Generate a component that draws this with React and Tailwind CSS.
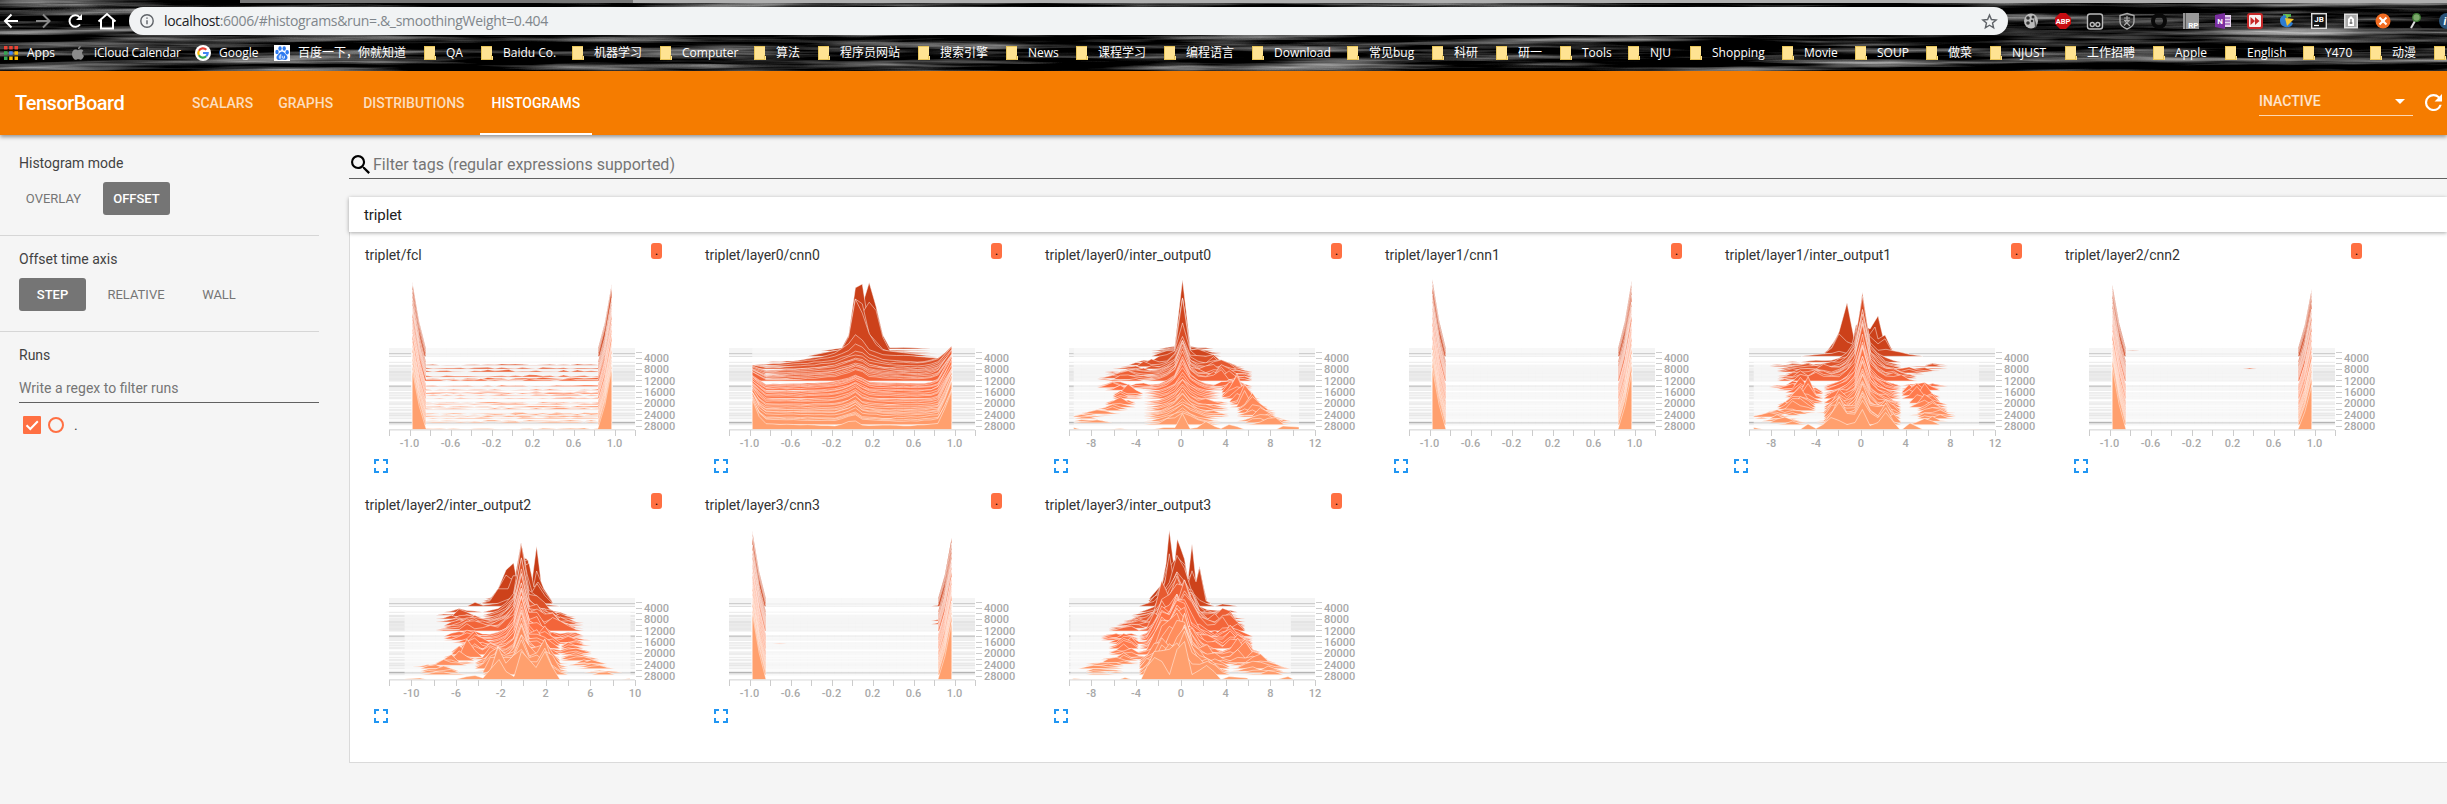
import React from "react";

const BASELINES = [
  79, 81, 83, 83.8, 86.3, 92.3, 95.3, 96.7, 99, 101, 102, 103, 104.3, 105.7, 107, 108.3, 109.7, 111,
  115.7, 116.4, 117.7, 119, 120.3, 122.7, 124, 125.7, 127.3, 128.7, 132, 133.3, 134.7, 137.3, 139.3,
  140.7, 143, 144, 145.3, 147, 148.7, 151.3, 152.8, 154.7, 159.5,
];
const STRONG = { 83.8: 0.22, 86.3: 0.16, 116.4: 0.2, 115.7: 0.14, 152.8: 0.42, 145.3: 0.12 };

const mix = (a, b, t) => a.map((v, i) => Math.round(v + (b[i] - v) * t));
function ridgeColor(y) {
  const t = (y - 79) / 80.5;
  const stops = [[198, 60, 22], [255, 112, 67], [255, 160, 110]];
  const c = t < 0.5 ? mix(stops[0], stops[1], t * 2) : mix(stops[1], stops[2], t * 2 - 1);
  return `rgb(${c.join(",")})`;
}
function noise(a, b, s) {
  const v = Math.sin(a * 127.1 + b * 311.7 + s * 74.7) * 43758.5453;
  return v - Math.floor(v);
}
function lerpKeys(keys, y) {
  if (y < keys[0][0] || y > keys[keys.length - 1][0]) return null;
  for (let i = 0; i < keys.length - 1; i++) {
    const a = keys[i];
    const b = keys[i + 1];
    if (y <= b[0]) {
      const t = (y - a[0]) / (b[0] - a[0] || 1);
      return a.map((v, j) => v + (b[j] - v) * t);
    }
  }
  return keys[0];
}
function at(pts, x) {
  if (x < pts[0][0] || x > pts[pts.length - 1][0]) return 0;
  for (let i = 0; i < pts.length - 1; i++) {
    const [x0, h0] = pts[i];
    const [x1, h1] = pts[i + 1];
    if (x <= x1) return h0 + ((h1 - h0) * (x - x0)) / (x1 - x0 || 1);
  }
  return 0;
}

const SPREAD = { range: [-9.5, 12], start: 4.7, step: 7.77 };

// A component is a list of [baseline, centre, half width, height] keys.
function spreadRidge(cfg, y, row) {
  const fixed = cfg.profiles && cfg.profiles[y];
  if (fixed) return fixed;
  const pts = [];
  for (let i = 0; i < 30; i++) {
    const x = cfg.start + i * cfg.step;
    let h = 0;
    cfg.lobes.forEach((keys, k) => {
      const c = lerpKeys(keys, y);
      if (!c) return;
      const d = Math.abs(x - c[1]) / (c[2] * (k < 2 && y > 113 ? 0.88 : 1));
      if (d < 1) h = Math.max(h, c[3] * (1 - d) * (0.12 + 1.25 * noise(i, row, k + cfg.seed)));
    });
    const s = lerpKeys(cfg.spike, y);
    if (s) {
      const n = Math.abs(Math.round((x - s[1]) / cfg.step));
      const fall = [1, s[2], s[2] * 0.5, s[2] * 0.22, s[2] * 0.1];
      if (n < 5) h = Math.max(h, s[3] * fall[n] * (0.82 + 0.3 * noise(i, row, 9 + cfg.seed)));
    }
    pts.push([x, h < 0.7 ? 0 : h]);
  }
  return pts;
}

function edgeRidge(cfg, y, row) {
  const pts = [];
  const t = (y - 79) / 80.5;
  const l = cfg.left[0] + (cfg.left[1] - cfg.left[0]) * t - 5 * noise(row, 1, cfg.seed);
  const r = cfg.right[0] + (cfg.right[1] - cfg.right[0]) * t - 5 * noise(row, 2, cfg.seed);
  for (let i = 0; i < 30; i++) {
    let h = 0;
    if (i === 0) h = l;
    else if (i === 1) h = l * 0.4;
    else if (i === 28) h = r * 0.4;
    else if (i === 29) h = r;
    else if (cfg.floor && i > 1 && i < 28) {
      const band = y > 97 && y < 112 ? 2.4 : 1.5;
      const mid = i > 9 ? 1 : 0.7;
      h = y > 90 && noise(row, 3, 2) > 0.25 ? noise(i, row, 5) * band * mid : 0;
    }
    pts.push([23.3 + i * 6.875, h]);
  }
  if (cfg.specks) cfg.specks.forEach(([b, i, h]) => b === y && (pts[i][1] = h));
  return pts;
}

const z = (list) => list.map(([x, h]) => [(x - 27) / 3, h]);
const BOWL = [
  [79, z([[97, 0], [405, 0], [427, 44], [447, 67], [467, 44], [490, 12], [510, 1], [560, 1.6], [630, 0], [695, 0]])],
  [81, z([[97, 0], [300, 0], [365, 3], [385, 14], [405, 63], [427, 67], [447, 22], [467, 8], [510, 1], [650, 0], [695, 0]])],
  [83, z([[97, 0], [300, 0], [365, 3], [385, 12], [405, 54], [427, 40], [447, 51], [467, 44], [490, 14], [510, 2], [640, 0], [695, 0]])],
  [83.8, z([[97, 0], [290, 0], [365, 4], [385, 13], [405, 55], [427, 50], [447, 20], [490, 4], [510, 2], [650, 0], [695, 0]])],
  [86.3, z([[97, 0], [260, 0], [365, 7], [385, 18], [405, 58], [427, 43], [447, 23], [467, 12], [490, 6], [640, 0], [695, 0]])],
  [92.3, z([[97, 0], [140, 0], [240, 2], [340, 8], [385, 18], [405, 28], [427, 22], [447, 13], [480, 8], [600, 6], [660, 4], [695, 12]])],
  [95.3, z([[97, 0], [250, 4], [340, 8], [385, 14], [405, 21], [427, 18], [450, 10], [500, 5], [600, 3], [650, 6], [695, 17]])],
  [99, z([[97, 4], [137, 1], [250, 3], [340, 6], [385, 11], [405, 13], [427, 12], [450, 7], [500, 4], [600, 3], [650, 6], [695, 21]])],
  [111, z([[97, 9], [137, 1], [250, 2], [340, 4], [385, 8], [405, 11], [427, 9], [450, 4], [500, 3], [600, 2], [650, 4], [695, 27]])],
  [128.7, z([[97, 15], [137, 3], [250, 2.5], [340, 4], [385, 8], [405, 12], [427, 7], [450, 4], [500, 3], [600, 3], [650, 4], [695, 33]])],
  [147, z([[97, 23], [117, 10], [137, 5], [350, 4], [385, 8], [405, 12], [427, 6], [500, 3], [600, 4], [655, 6], [675, 20], [695, 36]])],
  [159.5, z([[97, 27], [117, 12], [137, 5], [350, 3.5], [385, 7], [405, 8], [427, 4], [500, 3.6], [600, 4], [655, 6], [675, 20], [695, 36]])],
];
function bowlRidge(cfg, y, row) {
  let a = BOWL[0];
  let b = BOWL[0];
  for (let i = 0; i < BOWL.length; i++) {
    if (BOWL[i][0] <= y) a = BOWL[i];
    if (BOWL[i][0] >= y) {
      b = BOWL[i];
      break;
    }
  }
  const t = b[0] === a[0] ? 0 : (y - a[0]) / (b[0] - a[0]);
  const pts = [];
  for (let i = 0; i < 30; i++) {
    const x = 23.34 + i * 6.873;
    const h = at(a[1], x) * (1 - t) + at(b[1], x) * t;
    const n = h > 0 && y > 86.3 ? (noise(i, row, 4) - 0.5) * 0.8 : 0;
    pts.push([x, Math.max(0, h * (y > 93 ? 0.88 + 0.24 * noise(row, 8, i > 20 ? 2 : 1) : 1) + n)]);
  }
  return pts;
}

const CNN_TICKS = ["-1.0", "-0.6", "-0.2", "0.2", "0.6", "1.0"];
const cnnAxis = { n: 12, labels: CNN_TICKS, first: 1 };
const eightAxis = { n: 11, labels: ["-8", "-4", "0", "4", "8", "12"], first: 1 };
const tenAxis = { n: 11, labels: ["-10", "-6", "-2", "2", "6", "10"], first: 1 };

const CHARTS = [
  { tag: "triplet/fcl", axis: cnnAxis, make: edgeRidge, left: [70, 62], right: [69, 61], floor: true, seed: 1 },
  { tag: "triplet/layer0/cnn0", axis: cnnAxis, make: bowlRidge, seed: 2 },
  {
    tag: "triplet/layer0/inter_output0", axis: eightAxis, make: spreadRidge, ...SPREAD, seed: 3,
    spike: [[79, 113.4, 0.04, 72], [86.3, 113.4, 0.1, 60], [92.3, 113.4, 0.3, 36], [99, 113.4, 0.35, 30], [111, 113.4, 0.35, 30], [120, 113.4, 0.45, 24], [128, 113.4, 0.5, 18], [141, 113.4, 0.5, 19], [147, 113.4, 0.6, 15], [154.7, 113.4, 0.7, 12]],
    lobes: [
      [[79, 128, 17, 2.5], [83, 130, 20, 3], [92.3, 125, 32, 13], [97, 145, 26, 9], [105, 151, 34, 11], [111, 154, 30, 9], [118, 164, 19, 9], [125, 168, 16, 17], [135, 176, 15, 19], [142, 186, 19, 11], [149, 193, 27, 6], [154.7, 199, 27, 8]],
      [[83, 104, 20, 4], [92.3, 96, 30, 8], [99, 74, 30, 4], [108, 58, 30, 5], [111, 54, 28, 4], [117, 43, 17, 5], [124, 59, 13, 10], [136, 51, 16, 6], [143, 34, 24, 4], [147, 18, 22, 3], [153, 24, 20, 4]],
      [[97, 118, 38, 8], [111, 118, 34, 7], [116, 113, 27, 7], [154.7, 113, 32, 9]],
      [[115, 72, 14, 4], [120, 74, 12, 3]],
      [[133, 135, 24, 5], [148, 140, 22, 3]],
    ],
    profiles: { 159.5: [[4.7, 2], [12, 0], [40, 0], [51, 1], [60, 0], [83, 0], [95, 2], [106, 2], [113.4, 16], [121, 1], [128, 2], [137, 8], [146, 3], [152, 1], [160, 5], [168, 3], [176, 0], [207, 0], [214, 3.5], [230, 2.5]] },
  },
  { tag: "triplet/layer1/cnn1", axis: cnnAxis, make: edgeRidge, left: [71, 66], right: [70, 61], seed: 4 },
  {
    tag: "triplet/layer1/inter_output1", axis: eightAxis, make: spreadRidge, ...SPREAD, seed: 5,
    spike: [[86.3, 113.4, 0.3, 64], [100, 113.4, 0.35, 58], [111, 113.4, 0.4, 50], [125, 113.4, 0.4, 42], [140, 113.4, 0.4, 36], [150, 113.4, 0.45, 27], [154.7, 113.4, 0.5, 24]],
    lobes: [
      [[92.3, 62, 26, 2], [96, 48, 28, 4], [103, 68, 36, 8], [111, 62, 34, 9], [117, 44, 24, 5], [124, 59, 18, 16], [134, 52, 20, 15], [143, 42, 24, 9], [147, 22, 24, 4], [153, 36, 28, 5], [154.7, 40, 26, 5]],
      [[86.3, 95, 48, 6], [100, 113, 44, 11], [128, 113, 44, 13], [154.7, 113, 46, 16]],
      [[95, 180, 20, 3], [99, 182, 24, 2], [105, 140, 26, 8], [112, 150, 22, 6], [116, 178, 22, 4], [122, 168, 16, 13], [133, 176, 16, 14], [143, 184, 16, 8], [149, 186, 22, 5], [154.7, 178, 16, 6]],
      [[128, 90, 13, 10], [141, 90, 16, 13], [154.7, 90, 16, 22]],
      [[128, 136, 13, 8], [141, 136, 16, 11], [154.7, 136, 16, 18]],
    ],
    profiles: {
      79: [[80, 0], [90, 6], [98, 46], [105, 4], [114, 6], [121, 14], [129, 33], [135, 5], [144, 0]],
      81: [[78, 0], [84, 8], [90, 18], [98, 30], [104, 12], [107, 26], [113, 27], [121, 22], [129, 35], [134, 14], [144, 0]],
      83: [[75, 0], [83, 6], [90, 21], [98, 50], [106, 10], [108, 28], [113, 29], [118, 15], [126, 26], [129, 14], [136, 18], [144, 1], [152, 0]],
      83.8: [[75, 0], [83, 6], [90, 20], [98, 12], [103, 10], [108, 28], [113, 40], [118, 20], [129, 10], [136, 15], [144, 1], [160, 0]],
      86.3: [[52, 0], [70, 2], [83, 3], [90, 5], [98, 3], [106, 9], [113.4, 64], [121, 14], [129, 6], [137, 7], [152, 4], [160, 2], [174, 0]],
      159.5: [[4.7, 2], [15, 0], [51, 0], [59, 5.5], [67, 1], [74, 5], [82, 12], [90, 9], [98, 5], [106, 7], [113.4, 20], [121, 4], [129, 7], [136.6, 17], [145, 7], [151, 0], [153, 0], [161, 6.5], [174, 0], [210, 0], [230, 0.5]],
    },
  },
  { tag: "triplet/layer2/cnn2", axis: cnnAxis, make: edgeRidge, left: [65, 66], right: [63, 49], seed: 6, specks: [[81, 3, 0.6], [99, 20, 1]] },
  {
    tag: "triplet/layer2/inter_output2", axis: tenAxis, make: spreadRidge, ...SPREAD, start: 15.6, step: 7.79, seed: 7,
    spike: [[86.3, 132.4, 0.3, 63], [100, 132.4, 0.4, 50], [111, 132.4, 0.4, 46], [125, 132.4, 0.4, 42], [140, 132.4, 0.4, 38], [150, 132.4, 0.45, 34], [154.7, 132.4, 0.5, 28]],
    lobes: [
      [[92.3, 72, 20, 3], [95, 66, 18, 6], [103, 82, 30, 7], [111, 84, 36, 9], [118, 76, 26, 6], [125, 85, 15, 16], [137, 77, 18, 16], [143, 66, 19, 9], [148, 46, 26, 4], [154.7, 56, 24, 6]],
      [[92.3, 134, 30, 14], [111, 134, 38, 16], [128, 134, 30, 16], [154.7, 134, 46, 20]],
      [[95, 160, 20, 8], [103, 163, 26, 10], [111, 163, 28, 12], [117, 176, 22, 4], [127, 185, 13, 7], [137, 184, 20, 6], [148, 206, 20, 3], [154.7, 218, 18, 3]],
      [[92.3, 148, 14, 24], [110, 150, 18, 18], [132, 152, 18, 16], [154.7, 156, 18, 27]],
      [[130, 104, 20, 7], [154.7, 110, 20, 22]],
    ],
    profiles: {
      79: [[96, 0], [109, 3], [117, 16], [124, 34], [128, 8], [132, 42], [138, 40], [143, 18], [147.6, 53], [153, 10], [160, 0]],
      81: [[94, 0], [101, 2], [109, 12], [117, 31], [124.6, 38], [128, 20], [133, 40], [139, 41], [144, 12], [147.6, 30], [155, 12], [163, 0]],
      83: [[92, 0], [101, 3], [109, 14], [117, 28], [122, 24], [126, 26], [132, 60], [137, 38], [140, 40], [145, 16], [149, 21], [155, 12], [164, 0]],
      83.8: [[92, 0], [101, 3], [109, 15], [119, 15], [124, 28], [128, 28], [132, 61], [138, 30], [143, 12], [148, 20], [156, 8], [164, 0]],
      86.3: [[78, 0], [86, 4], [94, 1], [109, 3], [124, 9], [132.4, 62], [140, 16], [148, 10], [156, 2], [171, 0]],
      159.5: [[15.6, 0.6], [31, 1.5], [38, 0], [66, 0], [78, 3], [86, 4], [94, 1.5], [102, 11], [110, 20], [117, 8], [125, 3], [132.4, 28], [140, 20], [147, 12], [156, 28], [163, 13], [171, 0], [232, 0], [241, 1]],
    },
  },
  { tag: "triplet/layer3/cnn3", axis: cnnAxis, make: edgeRidge, left: [72, 68], right: [64, 60], seed: 8, specks: [[86.3, 27, 1], [101, 27, 1.6], [104.3, 27, 1.6], [124, 4, 0.5]] },
  {
    tag: "triplet/layer3/inter_output3", axis: eightAxis, make: spreadRidge, ...SPREAD, start: 1.5, step: 7.6, seed: 9,
    spike: [[86.3, 108.3, 0.6, 42], [100, 111, 0.6, 42], [111, 113, 0.6, 44], [125, 108.3, 0.6, 36], [140, 113, 0.5, 45], [150, 115, 0.5, 44], [154.7, 110, 0.6, 38]],
    lobes: [
      [[86.3, 74, 16, 2], [97, 84, 20, 5], [105, 76, 26, 6], [111, 64, 30, 4], [117, 48, 24, 3], [124, 59, 15, 10], [132, 56, 16, 9], [139, 58, 24, 6], [147, 33, 30, 4], [154.7, 32, 24, 3]],
      [[86.3, 108, 28, 38], [100, 110, 30, 36], [128, 110, 32, 38], [154.7, 108, 42, 32]],
      [[86.3, 152, 12, 5], [97, 152, 18, 6], [106, 154, 20, 18], [116, 160, 22, 9], [126, 167, 15, 16], [138, 173, 19, 17], [148, 190, 28, 8], [154.7, 194, 26, 4]],
      [[97, 135, 30, 7], [111, 138, 32, 9], [117, 132, 24, 10], [154.7, 138, 24, 14]],
      [[100, 95, 16, 38], [125, 95, 17, 30], [154.7, 90, 20, 24]],
    ],
    profiles: {
      79: [[80, 0], [93, 15], [97, 35], [100.3, 69], [104, 40], [108, 20], [116, 6], [119, 20], [123, 55], [127, 18], [130.5, 32], [137, 0]],
      81: [[79, 0], [87, 6], [94, 20], [100.3, 42], [104, 25], [108.3, 62], [112, 52], [115.5, 42], [119, 22], [123, 28], [127, 18], [130.5, 32], [138, 0]],
      83.8: [[79, 0], [86, 8], [92, 10], [96, 22], [100.3, 50], [104, 28], [108.3, 40], [116, 33], [119, 20], [123, 33], [127, 22], [130.5, 36], [137, 3], [142, 0]],
      83: [[79, 0], [87, 8], [94, 16], [100.3, 36], [108.3, 46], [116, 38], [119, 18], [123, 30], [127, 18], [130.5, 37], [137, 2], [142, 0]],
      159.5: [[1.5, 0], [5, 1], [15, 0.2], [50, 0], [56, 2], [63, 0], [72, 0], [78, 13], [85.5, 22], [93, 18], [100.5, 5], [108, 30], [115.5, 38], [123, 5], [130, 9], [137.5, 14], [145, 8], [152, 0], [160, 3], [178, 1.5], [180, 0], [208, 0], [219, 3], [225, 0]],
    },
  },
];

const Y_LABELS = [4000, 8000, 12000, 16000, 20000, 24000, 28000];

function RidgeChart({ chart }) {
  const W = 246;
  const step = W / chart.axis.n;
  return (
    <svg className="block h-[184px] w-[340px]" viewBox="-24 0 340 184">
      {BASELINES.map((y) => (
        <rect key={y} x="0" y={y - 0.5} width={W} height="1" fill="#000" fillOpacity={STRONG[y] || 0.09} />
      ))}
      <rect x="0" y="95" width={W} height="16" fill="#000" fillOpacity="0.02" />
      {BASELINES.map((y, row) => {
        const pts = chart.make(chart, y, row);
        const line = pts.map(([x, h]) => `L${x.toFixed(1)} ${(y - h).toFixed(1)}`).join("");
        const first = pts[0][0];
        const last = pts[pts.length - 1][0];
        return (
          <path
            key={y}
            d={`M${first.toFixed(1)} ${y.toFixed(1)}${line}L${last.toFixed(1)} ${y.toFixed(1)}Z`}
            fill={ridgeColor(y)}
            stroke="#fff"
            strokeOpacity="0.6"
            strokeWidth="0.8"
          />
        );
      })}
      <rect x="0" y="159.5" width={W} height="1" fill="#dcdcdc" />
      {Array.from({ length: chart.axis.n + 1 }, (_, i) => (
        <rect key={i} x={Math.round(i * step)} y="160" width="1" height="6" fill="#ccc" />
      ))}
      <g fill="#a8a8a8" fontFamily="Roboto, sans-serif" fontSize="11" fontWeight="500">
        {chart.axis.labels.map((t, i) => (
          <text key={t} x={(chart.axis.first + i * 2) * step} y="177" textAnchor="middle">
            {t}
          </text>
        ))}
        {Y_LABELS.map((t, i) => (
          <text key={t} x="255" y={92 + i * 11.36}>
            {t}
          </text>
        ))}
      </g>
      {Array.from({ length: 14 }, (_, i) => (
        <rect key={i} x="247" y={Math.round(82 + i * 5.68)} width="6" height="1" fill="#ccc" />
      ))}
    </svg>
  );
}

function ChartCell({ chart }) {
  return (
    <div className="h-[250px] w-[340px]">
      <div className="flex h-[38px] w-[297px] items-start justify-between">
        <span className="pt-[13px] text-[14px] leading-5 tracking-[-0.05px] text-[#333]">{chart.tag}</span>
        <span className="mt-[11px] flex h-4 w-[11px] items-center justify-center rounded-[3px] bg-[#ff7043] text-[12px] leading-4 text-black">.</span>
      </div>
      <RidgeChart chart={chart} />
      <svg className="mt-[5px] ml-[9px] h-[14px] w-[14px]" viewBox="0 0 14 14" fill="none" stroke="#2196f3" strokeWidth="2">
        <path d="M1 5V1h4M9 1h4v4M13 9v4H9M5 13H1V9" />
      </svg>
    </div>
  );
}

const FOLDERS = [
  ["QA", "w-[57px]"], ["Baidu Co.", "w-[91px]"], ["机器学习", "w-[88px]"], ["Computer", "w-[94px]"],
  ["算法", "w-[64px]"], ["程序员网站", "w-[100px]"], ["搜索引擎", "w-[88px]"], ["News", "w-[70px]"],
  ["课程学习", "w-[88px]"], ["编程语言", "w-[88px]"], ["Download", "w-[95px]"], ["常见bug", "w-[85px]"],
  ["科研", "w-[64px]"], ["研一", "w-[64px]"], ["Tools", "w-[68px]"], ["NJU", "w-[62px]"],
  ["Shopping", "w-[92px]"], ["Movie", "w-[73px]"], ["SOUP", "w-[71px]"], ["做菜", "w-[64px]"],
  ["NJUST", "w-[75px]"], ["工作招聘", "w-[88px]"], ["Apple", "w-[72px]"], ["English", "w-[78px]"],
  ["Y470", "w-[67px]"], ["动漫", "w-[64px]"], ["", "w-[30px]"],
];

function FolderIcon() {
  return (
    <svg className="mr-[10px] h-[14px] w-3 shrink-0" viewBox="0 0 12 14">
      <path d="M0 0h11v10h1v4H0z" fill="#ffe392" />
      <path d="M0.5 0v14M0 .5h11M0 13.5h11.5M10.5 9v5" stroke="#e8c55a" fill="none" />
    </svg>
  );
}

function BrowserTexture() {
  return (
    <svg className="absolute inset-0 h-full w-full" preserveAspectRatio="none">
      <filter id="streaks" x="0" y="0" width="100%" height="100%" colorInterpolationFilters="sRGB">
        <feTurbulence type="fractalNoise" baseFrequency="0.005 0.14" numOctaves="4" seed="11" />
        <feColorMatrix values="1.5 0 0 0 -0.64  1.5 0 0 0 -0.64  1.5 0 0 0 -0.64  0 0 0 0 1" />
      </filter>
      <rect width="100%" height="100%" filter="url(#streaks)" />
      <rect x="240" width="393" height="3" fill="#777" />
      <rect x="633" width="1814" height="3" fill="#b0b0b0" />
    </svg>
  );
}

function Extensions() {
  const cell = "block h-5 w-5 shrink-0";
  return (
    <div className="ml-[13px] flex h-[36px] items-center gap-3">
      <svg className={cell} viewBox="0 0 20 20"><ellipse cx="10" cy="10" rx="7" ry="7.5" fill="#bbb" /><g fill="#333"><circle cx="7" cy="7" r="1.8" /><circle cx="12" cy="6" r="1.5" /><circle cx="7" cy="12" r="1.8" /><circle cx="11" cy="10" r="1.2" /></g><path d="M13 6l3 9-2 2z" fill="#555" /></svg>
      <svg className={cell} viewBox="0 0 20 20"><path d="M7 2h6l5 5v6l-5 5H7l-5-5V7z" fill="#c70d12" /><text x="10" y="13" textAnchor="middle" fontSize="7.5" fontWeight="700" fontFamily="Roboto, sans-serif" fill="#fff">ABP</text></svg>
      <svg className={cell} viewBox="0 0 20 20" fill="none" stroke="#bbb" strokeWidth="1.4"><rect x="2.5" y="3" width="15" height="15" rx="2.5" fill="#111" /><circle cx="7.3" cy="13.5" r="2" /><circle cx="12.8" cy="13.5" r="2" /></svg>
      <svg className={cell} viewBox="0 0 20 20" fill="none" stroke="#aaa" strokeWidth="1.4"><path d="M10 2.5l7 2v6c0 4-3 6-7 7.500-4-1.500-7-3.500-7-7.500v-6z" /><path d="M7 7h6M10 5v4M7 9.500h5l-5 5M8 10l5 5" strokeWidth="1.200" /></svg>
      <svg className={cell} viewBox="0 0 20 20"><circle cx="10" cy="10" r="6" fill="none" stroke="#090909" strokeWidth="4" /></svg>
      <svg className={cell} viewBox="0 0 20 20"><rect x="2" y="2" width="16" height="16" fill="#999" /><path d="M4.500 2v16" stroke="#555" /><text x="17.500" y="17" textAnchor="end" fontSize="8" fontWeight="700" fontFamily="Roboto, sans-serif" fill="#fff">RP</text></svg>
      <svg className={cell} viewBox="0 0 20 20"><path d="M11 4h7v12h-7z" fill="#e6d3ee" /><path d="M12 7h5M12 10h5M12 13h5" stroke="#7b2fa0" /><path d="M2 4l10-2v16L2 16z" fill="#7b2fa0" /><text x="7" y="13" textAnchor="middle" fontSize="8" fontWeight="700" fontFamily="Roboto, sans-serif" fill="#fff">N</text></svg>
      <svg className={cell} viewBox="0 0 20 20"><rect x="3" y="3" width="14" height="14" rx="2" fill="#f8f0f0" stroke="#c62828" strokeWidth="2" /><path d="M5.500 6l4.500 4-4.500 4zM10 6l4.500 4-4.500 4z" fill="#c62828" /></svg>
      <svg className={cell} viewBox="0 0 20 20"><path d="M6 3h8v3H6z" fill="#4caf50" /><path d="M3 9c0-4 5-6 9-5l-2 5 6 3c-1 4-5 5-8 4s-5-3-5-7z" fill="#2d7dd2" /><path d="M8 7l9 1-7 7z" fill="#f4c430" /><path d="M8 3l5 1-3 4z" fill="#7cc242" /></svg>
      <svg className={cell} viewBox="0 0 20 20"><rect x="2.700" y="2.700" width="14.600" height="14.600" fill="#111" stroke="#ddd" strokeWidth="1.400" /><text x="10" y="11" textAnchor="middle" fontSize="8" fontWeight="700" fontFamily="Roboto, sans-serif" fill="#fff">JB</text><path d="M5 14.500h5" stroke="#fff" strokeWidth="1.300" /></svg>
      <svg className={cell} viewBox="0 0 20 20"><rect x="3" y="2.500" width="14" height="15" fill="#ddd" /><rect x="4.500" y="4" width="11" height="12" fill="#aaa" /><path d="M7 8l3-3 3 3v7H7z" fill="#fff" /><path d="M10 8v5M8.500 12h3" stroke="#555" /></svg>
      <svg className={cell} viewBox="0 0 20 20"><circle cx="10" cy="10" r="7.500" fill="#f36c21" /><path d="M6.500 6.500l7 7M13.500 6.500l-7 7" stroke="#fff" strokeWidth="2" /><circle cx="10" cy="10" r="1.800" fill="#fff" /></svg>
      <svg className={cell} viewBox="0 0 20 20"><path d="M6 15l7-2 4 4H4z" fill="#111" /><path d="M10 10l-4 7" stroke="#ddd" strokeWidth="2" /><circle cx="11.500" cy="6.500" r="3.800" fill="#7ba86a" stroke="#3d7a33" strokeWidth="1.300" /></svg>
      <svg className={cell} viewBox="0 0 20 20"><circle cx="10" cy="10" r="8" fill="#2a5378" /><text x="8" y="14" textAnchor="middle" fontSize="11" fontStyle="italic" fontWeight="700" fontFamily="Roboto, sans-serif" fill="#fff">i</text></svg>
    </div>
  );
}

function BrowserChrome() {
  return (
    <div className="relative h-[71px] overflow-hidden bg-black text-white">
      <BrowserTexture />
      <div className="relative flex h-[42px] w-[2470px] items-center">
        <svg className="h-5 w-[129px] shrink-0" viewBox="0 0 129 20" fill="none" strokeWidth="2">
          <path d="M18 10H5M11.500 3.500L5 10l6.500 6.500" stroke="#fff" />
          <path d="M36 10h13M43 3.500l6.500 6.500-6.500 6.500" stroke="#888" />
          <path d="M80 13.500A5.800 5.800 0 1 1 79.500 6" stroke="#fff" />
          <path d="M82 3v6h-6z" fill="#fff" />
          <path d="M98.500 10.500l8.500-7.500 8.500 7.500M101 9v8.500h12V9" stroke="#fff" />
        </svg>
        <div className="flex h-7 w-[1879px] shrink-0 items-center rounded-full bg-[#f1f3f4] pr-[10px] pl-[11px]">
          <svg className="h-[14px] w-[14px]" viewBox="0 0 14 14" fill="none" stroke="#5f6368" strokeWidth="1.400">
            <circle cx="7" cy="7" r="6.200" />
            <path d="M7 6.200v4M7 3.500v1.300" />
          </svg>
          <span className="ml-[10px] flex-1 text-[14px] leading-5 tracking-[-0.32px] text-[#80868b] [font-family:'Open_Sans','Noto_Sans',sans-serif]">
            <span className="text-[#202124]">localhost</span>:6006/#histograms&amp;run=.&amp;_smoothingWeight=0.404
          </span>
          <svg className="h-[17px] w-[17px]" viewBox="0 0 24 24" fill="none" stroke="#5f6368" strokeWidth="2">
            <path d="M12 3l2.700 6.200 6.700.6-5.100 4.400 1.500 6.600L12 17.300l-5.800 3.500 1.500-6.600L2.600 9.800l6.700-.6z" />
          </svg>
        </div>
        <Extensions />
      </div>
      <div className="relative flex h-[22px] w-[2600px] items-center pl-1 text-[12px] leading-4 whitespace-nowrap [font-family:'Open_Sans','Noto_Sans_CJK_SC',sans-serif]">
        <div className="flex w-[68px] shrink-0 items-center">
          <svg className="mr-[9px] h-[14px] w-[14px]" viewBox="0 0 14 14">
            <path d="M0 0h3.500v3.500H0zM5.200 0h3.500v3.500H5.200zM10.500 0H14v3.500h-3.500z" fill="#ea4335" />
            <path d="M0 5.200h3.500v3.500H0z" fill="#34a853" />
            <path d="M5.200 5.200h3.500v3.500H5.200z" fill="#4285f4" />
            <path d="M10.500 5.200H14v3.500h-3.500zM10.500 10.500H14V14h-3.500zM5.200 10.500h3.500V14H5.200z" fill="#fbbc05" />
            <path d="M0 10.500h3.500V14H0z" fill="#34a853" />
          </svg>
          <span>Apps</span>
        </div>
        <div className="flex w-[123px] shrink-0 items-center">
          <svg className="mr-[10px] h-[14px] w-3" viewBox="0 0 12 14" fill="#8c8c8c">
            <path d="M8.800 0c0 1.800-1.300 3.200-2.900 3.200C5.900 1.600 7.200.2 8.800 0z" />
            <path d="M6 4.200c.8 0 1.600-.8 3-.7 1 0 1.900.5 2.400 1.300-2 1.300-1.700 4 .6 5-.5 1.600-1.700 4-3.100 4-1 0-1.400-.6-2.600-.6s-1.600.6-2.600.6C1.700 13.800 0 10.500 0 8c0-2.700 1.600-4.400 3.400-4.400 1.100 0 1.900.6 2.600.6z" />
          </svg>
          <span className="tracking-[-0.15px]">iCloud Calendar</span>
        </div>
        <div className="flex w-[79px] shrink-0 items-center">
          <svg className="mr-[8px] h-4 w-4" viewBox="0 0 16 16" fill="none" strokeWidth="2.200">
            <circle cx="8" cy="8" r="8" fill="#fff" stroke="none" />
            <path d="M11.300 4.700A4.700 4.700 0 0 0 3.900 5.700" stroke="#ea4335" />
            <path d="M3.900 5.700a4.700 4.700 0 0 0 0 4.600" stroke="#fbbc05" />
            <path d="M3.900 10.300a4.700 4.700 0 0 0 7.300 1" stroke="#34a853" />
            <path d="M11.200 11.300A4.700 4.700 0 0 0 12.700 8H8" stroke="#4285f4" />
          </svg>
          <span>Google</span>
        </div>
        <div className="flex w-[150px] shrink-0 items-center">
          <svg className="mr-[8px] h-4 w-4" viewBox="0 0 16 16">
            <rect width="16" height="16" fill="#fff" />
            <g fill="#2f7bf0">
              <ellipse cx="3" cy="7" rx="1.700" ry="2.300" />
              <ellipse cx="6" cy="3.500" rx="1.700" ry="2.300" />
              <ellipse cx="10.200" cy="3.500" rx="1.700" ry="2.300" />
              <ellipse cx="13.200" cy="7.300" rx="1.700" ry="2.300" />
              <path d="M8 6.500c2 0 3 2.300 4.500 3.700 2 2 .8 4.800-1.500 4.800-1.200 0-2-.4-3-.4s-1.800.4-3 .4c-2.300 0-3.500-2.800-1.500-4.800C5 8.800 6 6.500 8 6.500z" />
            </g>
            <path d="M6.800 9v4.200H5.300v-2.400h1.500M8.700 10.800v2.400h1.800v-2.400" stroke="#fff" fill="none" strokeWidth=".8" />
          </svg>
          <span>百度一下，你就知道</span>
        </div>
        {FOLDERS.map(([name, w], i) => (
          <div key={i} className={`flex shrink-0 items-center ${w}`}>
            <FolderIcon />
            <span>{name}</span>
          </div>
        ))}
      </div>
    </div>
  );
}

function AppHeader() {
  return (
    <header className="relative z-10 flex h-16 items-stretch bg-[#f57c00] text-white shadow-[0_2px_4px_rgba(0,0,0,0.4)]">
      <div className="flex w-[180px] items-center pl-[15px] text-[20px] font-medium tracking-[-0.5px]">TensorBoard</div>
      <nav className="flex flex-1 text-[14px] font-medium text-white/75">
        <span className="flex items-center px-3">SCALARS</span>
        <span className="ml-[1px] flex items-center px-3">GRAPHS</span>
        <span className="ml-[6px] flex items-center px-3">DISTRIBUTIONS</span>
        <span className="ml-[3px] flex items-center border-b-2 border-white px-3 pt-0.5 text-white">HISTOGRAMS</span>
      </nav>
      <div className="mt-[18px] mr-[12px] flex h-[27px] w-[154px] items-center justify-between border-b border-white/70 pr-2 pb-[1px] text-[14px] font-medium text-white/80">
        <span>INACTIVE</span>
        <svg className="h-[5px] w-[10px]" viewBox="0 0 10 5" fill="#fff"><path d="M0 0h10L5 5z" /></svg>
      </div>
      <svg className="mt-[23px] mr-[5px] h-[17px] w-[17px]" viewBox="4 4 16 16" fill="#fff">
        <path d="M17.650 6.350A7.958 7.958 0 0 0 12 4a8 8 0 1 0 7.730 10h-2.080A5.990 5.990 0 0 1 12 18a6 6 0 1 1 0-12c1.660 0 3.140.690 4.220 1.780L13 11h7V4l-2.350 2.350z" />
      </svg>
    </header>
  );
}

function Sidebar() {
  const btn = "flex h-[33px] items-center justify-center rounded-[3px] text-[13px]";
  const on = "w-[67px] bg-[#757575] font-medium text-white";
  return (
    <aside className="w-[319px] shrink-0 text-[14px] text-[#424242]">
      <section className="h-[101px] border-b border-[#d6d6d6] pt-[18px] pl-[19px]">
        <h3 className="leading-5">Histogram mode</h3>
        <div className="mt-[9px] flex gap-[15px]">
          <span className={`${btn} w-[69px] text-[#757575]`}>OVERLAY</span>
          <span className={`${btn} ${on}`}>OFFSET</span>
        </div>
      </section>
      <section className="h-24 border-b border-[#d6d6d6] pt-[13px] pl-[19px]">
        <h3 className="leading-5">Offset time axis</h3>
        <div className="mt-[9px] flex">
          <span className={`${btn} ${on}`}>STEP</span>
          <span className={`${btn} ml-[17px] w-[66px] text-[#757575]`}>RELATIVE</span>
          <span className={`${btn} ml-[17px] w-[66px] text-[#757575]`}>WALL</span>
        </div>
      </section>
      <section className="pt-[13px] pl-[19px]">
        <h3 className="leading-5">Runs</h3>
        <div className="mt-[13px] flex h-[25px] border-b border-[#616161] leading-5 text-[#757575]">Write a regex to filter runs</div>
        <div className="mt-[13px] ml-1 flex items-center">
          <svg className="h-[18px] w-[18px]" viewBox="0 0 18 18">
            <rect width="18" height="18" rx="1" fill="#ff7043" />
            <path d="M3.500 9.200l3.800 3.800 7.500-7.800" fill="none" stroke="#fff" strokeWidth="2" />
          </svg>
          <span className="ml-[7px] h-4 w-4 rounded-full border-2 border-[#ff7043]" />
          <span className="ml-[10px] leading-[18px]">.</span>
        </div>
      </section>
    </aside>
  );
}

export default function App() {
  return (
    <div className="flex h-[804px] w-[2447px] flex-col overflow-hidden bg-[#f5f5f5] [font-family:Roboto,sans-serif]">
      <BrowserChrome />
      <AppHeader />
      <div className="flex min-h-0 flex-1">
        <Sidebar />
        <main className="ml-[30px] flex-1">
          <div className="flex h-[44px] items-center border-b border-[#616161] pt-[16px]">
            <svg className="ml-[2px] h-[19px] w-[19px]" viewBox="3 3 17.500 17.500">
              <path d="M15.500 14h-.790l-.280-.270A6.471 6.471 0 0 0 16 9.500 6.500 6.500 0 1 0 9.500 16c1.610 0 3.090-.590 4.230-1.570l.270.280v.790l5 4.990L20.490 19l-4.990-5zm-6 0C7.010 14 5 11.990 5 9.500S7.010 5 9.500 5 14 7.010 14 9.500 11.990 14 9.500 14z" />
            </svg>
            <span className="ml-[3px] text-[16px] leading-6 text-[#757575]">Filter tags (regular expressions supported)</span>
          </div>
          <div className="relative mt-[18px] flex h-[35px] items-center bg-white pt-px pl-[15px] text-[15px] tracking-[-0.1px] text-[#212121] shadow-[0_1px_4px_rgba(0,0,0,0.35)]">triplet</div>
          <div className="grid h-[531px] grid-cols-[repeat(6,340px)] content-start border-b border-l border-[#dadada] bg-white pl-[15px]">
            {CHARTS.map((c) => (
              <ChartCell key={c.tag} chart={c} />
            ))}
          </div>
        </main>
      </div>
    </div>
  );
}
